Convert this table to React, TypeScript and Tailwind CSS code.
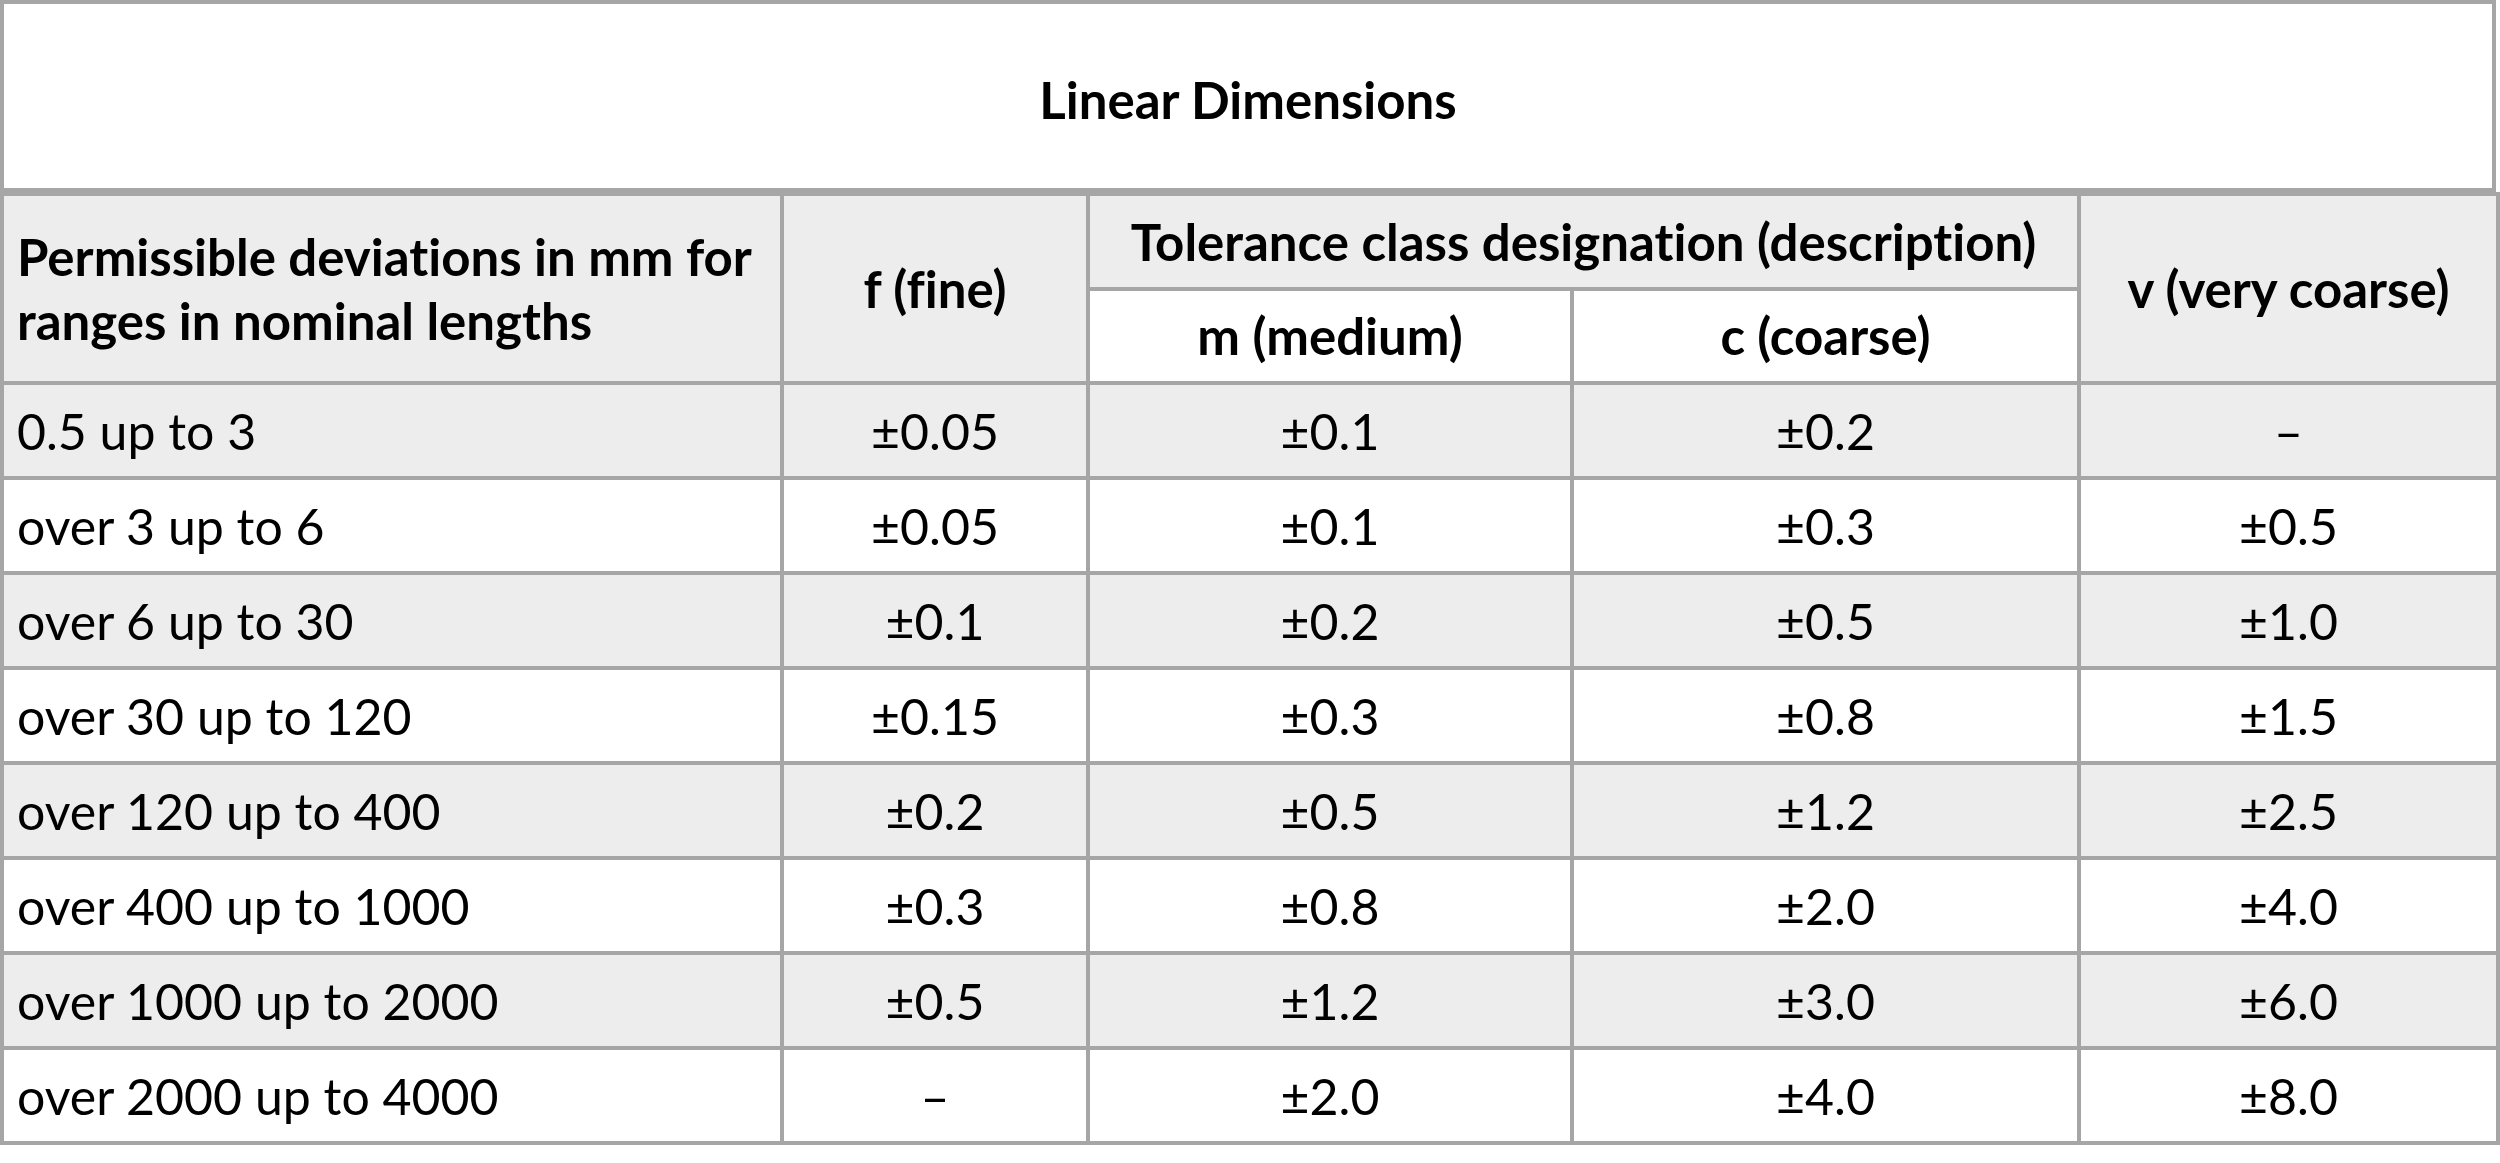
import React from "react";

const rows: string[][] = [
  ["0.5 up to 3", "±0.05", "±0.1", "±0.2", "–"],
  ["over 3 up to 6", "±0.05", "±0.1", "±0.3", "±0.5"],
  ["over 6 up to 30", "±0.1", "±0.2", "±0.5", "±1.0"],
  ["over 30 up to 120", "±0.15", "±0.3", "±0.8", "±1.5"],
  ["over 120 up to 400", "±0.2", "±0.5", "±1.2", "±2.5"],
  ["over 400 up to 1000", "±0.3", "±0.8", "±2.0", "±4.0"],
  ["over 1000 up to 2000", "±0.5", "±1.2", "±3.0", "±6.0"],
  ["over 2000 up to 4000", "–", "±2.0", "±4.0", "±8.0"],
];

const cell = "border-4 border-[#a6a6a6] align-middle";
const head = `${cell} font-bold text-[51px]`;

export default function App() {
  return (
    <div className="w-[2496px] bg-white text-black font-['Lato',sans-serif] text-[50px] leading-[64px] [font-variant-ligatures:none]">
      {/* Title */}
      <div className="h-[192px] pt-[8px] border-4 border-[#a6a6a6] flex items-center justify-center font-bold text-[51px]">
        Linear Dimensions
      </div>

      <table className="w-[2496px] table-fixed border-collapse">
        <colgroup>
          <col className="w-[780px]" />
          <col className="w-[306px]" />
          <col className="w-[484px]" />
          <col className="w-[507px]" />
          <col className="w-[419px]" />
        </colgroup>
        <thead>
          <tr className="h-[95px]">
            <th rowSpan={2} className={`${head} bg-[#ededed] text-left pl-[13px] whitespace-nowrap`}>
              Permissible deviations in mm for
              <br />
              ranges in nominal lengths
            </th>
            <th rowSpan={2} className={`${head} bg-[#ededed] text-center`}>
              f (fine)
            </th>
            <th colSpan={2} className={`${head} bg-[#ededed] text-center whitespace-nowrap`}>
              Tolerance class designation (description)
            </th>
            <th rowSpan={2} className={`${head} bg-[#ededed] text-center whitespace-nowrap`}>
              v (very coarse)
            </th>
          </tr>
          <tr className="h-[94px]">
            <th className={`${head} bg-white text-center`}>m (medium)</th>
            <th className={`${head} bg-white text-center`}>c (coarse)</th>
          </tr>
        </thead>
        <tbody>
          {rows.map((r, i) => (
            <tr key={i} className={`h-[95px] ${i % 2 === 0 ? "bg-[#ededed]" : "bg-white"}`}>
              {r.map((v, j) => (
                <td
                  key={j}
                  className={`${cell} ${j === 0 ? "text-left pl-[13px]" : "text-center"} whitespace-nowrap`}
                >
                  {v}
                </td>
              ))}
            </tr>
          ))}
        </tbody>
      </table>
    </div>
  );
}
